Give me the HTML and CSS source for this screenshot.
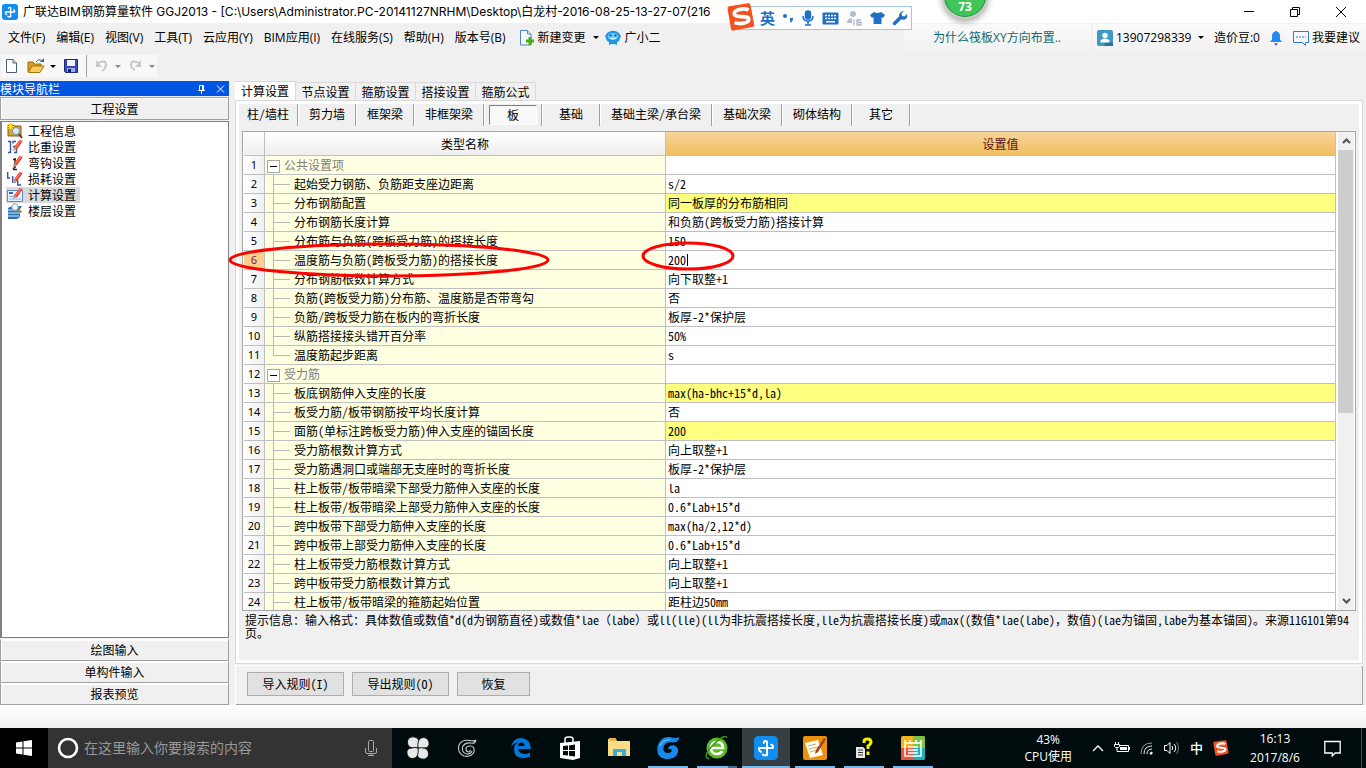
FILE: index.html
```html
<!DOCTYPE html>
<html lang="zh-CN">
<head>
<meta charset="utf-8">
<title>广联达BIM钢筋算量软件 GGJ2013</title>
<link rel="stylesheet" href="styles.css">
</head>
<body>
<svg class="defs" width="0" height="0" aria-hidden="true">
  <defs>
    <symbol id="ggj" viewBox="0 0 16 16"><rect width="16" height="16" rx="3" fill="#0f8df0"/><path d="M8.700 12.800V4.400c0-1.500-2.200-1.500-2.200.2M3.400 8h9.200M3.400 8c-.2 1.200.3 2.200 1.200 2.600M12.600 8c.3-1.200-.1-2-1.100-2.200M8.700 11c0 2.200-2 2.400-2.800 1.300" fill="none" stroke="#fff" stroke-width="1.300" stroke-linecap="round"/></symbol>
    <symbol id="pencil" viewBox="0 0 16 16"><path d="M6.500 9 12.500 1l3.300 1L9.800 10.500z" fill="#e8432a"/><path d="M8 9 13.600 2" stroke="#ff9a80"/><path d="M6.500 9l3 1.500L5.500 12z" fill="#d9a77c"/></symbol>
    <symbol id="sogou" viewBox="0 0 28 28"><path d="M.5 5.500Q.2 3.600 2.200 3.200L21 .3q2-.3 2.500 1.700l3.700 19.500q.4 2-1.600 2.600L6.500 27.500q-2 .5-2.500-1.500z" fill="#f4511e"/><path d="M21.500 7C18 5 7 5.700 7.300 11c.2 4 14 1.200 14.400 5 .3 4.500-9 5.500-14.200 3.500" fill="none" stroke="#fff" stroke-width="3.800"/></symbol>
  </defs>
</svg>

<header class="titlebar">
  <svg class="app-icon" width="16" height="16"><use href="#ggj"/></svg>
  <h1 class="title">广联达BIM钢筋算量软件 GGJ2013 - [C:\Users\Administrator.PC-20141127NRHM\Desktop\白龙村-2016-08-25-13-27-07(216</h1>
  <div class="window-buttons">
    <button type="button" aria-label="最小化"><svg width="12" height="12"><path d="M1 5.500h10" stroke="#000"/></svg></button>
    <button type="button" aria-label="还原"><svg width="12" height="12" fill="none" stroke="#000"><path d="M1.500 3.500h7v7h-7zM3.500 3V1.500h7v7H9"/></svg></button>
    <button type="button" aria-label="关闭"><svg width="12" height="12"><path d="M1 1l10 10M11 1L1 11" stroke="#000"/></svg></button>
  </div>
</header>

<nav class="menubar">
  <div class="menus">
    <button type="button">文件(F)</button>
    <button type="button">编辑(E)</button>
    <button type="button">视图(V)</button>
    <button type="button">工具(T)</button>
    <button type="button">云应用(Y)</button>
    <button type="button">BIM应用(I)</button>
    <button type="button">在线服务(S)</button>
    <button type="button">帮助(H)</button>
    <button type="button">版本号(B)</button>
  </div>
  <button type="button" class="with-icon"><svg width="16" height="16"><path d="M1.500.5h7l3.500 3.500v11H1.500z" fill="#f4f9ff" stroke="#4a86c5"/><path d="M8.500.5V4H12" fill="#cfe2f7" stroke="#4a86c5"/><path d="M7 9.500h2.500V7h3v2.500H15v3h-2.500V15h-3v-2.500H7z" fill="#48ac18"/></svg>新建变更<i class="caret"></i></button>
  <button type="button" class="with-icon assistant"><svg width="16" height="16"><path d="M2 3q6-4.500 12 0l2 3-2 5-2 1v3l-3-1H7l-3 1v-3l-2-1-2-5z" fill="#2196e3"/><ellipse cx="8" cy="6.500" rx="5.300" ry="3.500" fill="#69cdfa"/><circle cx="5.500" cy="5.500" r="1.100" fill="#064b86"/><circle cx="10.500" cy="5.500" r="1.100" fill="#064b86"/><path d="M5.500 8q2.500 2 5 0" fill="none" stroke="#fff"/></svg>广小二</button>
  <div class="notice"><a href="#">为什么筏板XY方向布置..</a></div>
  <div class="account">
    <button type="button" class="with-icon user"><svg width="16" height="16"><rect width="16" height="16" rx="2" fill="#3f98c8"/><path d="M9 10l7 3v3H7z" fill="#26739e"/><circle cx="8" cy="5.500" r="2.700" fill="#fff"/><path d="M3.500 12.500V10l3-1.200h3l3 1.200v2.500z" fill="#fff"/></svg>13907298339<i class="caret"></i></button>
    <span>造价豆:0</span>
    <button type="button" aria-label="通知"><svg width="14" height="16"><path d="M1 12l2-2.500V6q0-3.500 3-4.500 1-1.500 2 0 3 1 3 4.500v3.500L13 12z" fill="#2489f5"/><path d="M5 13.500h4l-2 2z" fill="#173f70"/></svg></button>
    <button type="button" class="with-icon"><svg width="16" height="16" fill="none" stroke="#2a7bdd"><path d="M.5 1.500h15v11h-3v3l-3-3h-9z"/><path d="M3 7h10" stroke-dasharray="2 1"/></svg>我要建议</button>
  </div>
</nav>

<div class="toolbar">
  <button type="button" aria-label="新建"><svg width="16" height="16"><path d="M2.500 1.500h6.500l3.500 3.500v9.500h-10z" fill="#fff" stroke="#465f78"/><path d="M9 1.500V5h3.500" fill="#d8e6f2" stroke="#465f78"/></svg></button>
  <button type="button" aria-label="打开"><svg width="18" height="16"><path d="M1 14V4h5l1 2h7v3" fill="#d89a20" stroke="#a06a0a"/><path d="M1.500 14.500 5 8h12l-4 6.500z" fill="#f7ce5e" stroke="#a8720c"/><path d="M9 4q3-4 6-1" fill="none" stroke="#38638d"/><path d="M13 4h4V0z" fill="#38638d"/></svg><i class="caret"></i></button>
  <button type="button" aria-label="保存"><svg width="16" height="16"><path d="M1.500 1.500h13v13h-12l-1-1z" fill="#3948b4" stroke="#202b80"/><path d="M4 2h8v6H4z" fill="#eef2ff"/><path d="M4 10h8v4H4z" fill="#9caaf0"/><path d="M5 11h3v3H5z" fill="#17205f"/></svg></button>
  <span class="divider"></span>
  <button type="button" aria-label="撤销" disabled><svg width="16" height="16"><path d="M4 5q8-4 8 2 0 3-4 6" fill="none" stroke="#c8c8c8" stroke-width="2"/><path d="M2 2v7h6z" fill="#c8c8c8"/></svg><i class="caret"></i></button>
  <button type="button" aria-label="重做" disabled><svg width="16" height="16"><path d="M11 5Q3 1 3 7q0 3 4 5" fill="none" stroke="#c8c8c8" stroke-width="2"/><path d="M13 2v7H7z" fill="#c8c8c8"/></svg><i class="caret"></i></button>
</div>

<main class="workspace">
  <aside class="sidebar">
    <div class="side-head"><h2>模块导航栏</h2>
      <button type="button" aria-label="固定"><svg width="9" height="10" fill="none" stroke="#fff"><path d="M2.500 6V1.500h4V6M5.500 2v4M1 6.500h7M4.500 7v3"/></svg></button>
      <button type="button" aria-label="关闭"><svg width="9" height="10"><path d="M1 1.500l7 7M8 1.500l-7 7" stroke="#fff"/></svg></button>
    </div>
    <button type="button" class="section first">工程设置</button>
    <ul class="tree">
      <li><a href="#"><svg width="16" height="16"><path d="M1 2h5l1 1h7v10H1z" fill="#d9a13a" stroke="#8a5d14"/><path d="M3.500 0v7M0 3.500h7M1 1l5 5M6 1L1 6" stroke="#ffd92c"/><circle cx="9" cy="8" r="3.500" fill="#d8ecff" stroke="#7898b8"/><path d="M12 11l3 4" stroke="#604020" stroke-width="2"/></svg>工程信息</a></li>
      <li><a href="#"><svg width="16" height="16"><path d="M1 2.500h2.500v11H1M6 4.500V2.500h3M6 7.500h3.500v6H7" fill="none" stroke="#2f56a8" stroke-width="1.400"/><use href="#pencil"/></svg>比重设置</a></li>
      <li><a href="#"><svg width="16" height="16"><path d="M6 4.500h3M8 3v10M8 12l-2 2M6 14.500h4" stroke="#222" stroke-width="1.400" fill="none"/><use href="#pencil"/></svg>弯钩设置</a></li>
      <li><a href="#"><svg width="16" height="16"><path d="M.7 1v6H3M5.700 5v6h3M10.700 9v5H14" fill="none" stroke="#2f56a8" stroke-width="1.400"/><use href="#pencil"/></svg>损耗设置</a></li>
      <li><a href="#" class="selected"><svg width="16" height="16"><path d="M.5 3.500h15v11H.5z" fill="#e7f1ff" stroke="#5a87c5"/><path d="M2 6h4" stroke="#2d6ac1" stroke-width="2"/><path d="M2 9.500h9M2 12h12" stroke="#8fb0dc"/><use href="#pencil"/></svg>计算设置</a></li>
      <li><a href="#"><svg width="16" height="16"><path d="M1 5l4-2h10l-2 3v8l-3 2H1z" fill="#2f70b4"/><path d="M1 7h12M1 10h12M1 13h11" stroke="#d2eaff"/><circle cx="8" cy="4" r="3.200" fill="#f0f8ff" stroke="#8aa8c0"/><path d="M10.500 6l4 3.500" stroke="#a08050" stroke-width="2"/></svg>楼层设置</a></li>
    </ul>
    <button type="button" class="section">绘图输入</button>
    <button type="button" class="section">单构件输入</button>
    <button type="button" class="section">报表预览</button>
  </aside>

  <section class="content">
    <div class="tabs" role="tablist">
      <button type="button" role="tab" aria-selected="true">计算设置</button>
      <button type="button" role="tab">节点设置</button>
      <button type="button" role="tab">箍筋设置</button>
      <button type="button" role="tab">搭接设置</button>
      <button type="button" role="tab">箍筋公式</button>
    </div>
    <div class="page">
      <div class="subtabs">
        <button type="button">柱/墙柱</button>
        <button type="button">剪力墙</button>
        <button type="button">框架梁</button>
        <button type="button">非框架梁</button>
        <button type="button" class="pressed"><span>板</span></button>
        <button type="button">基础</button>
        <button type="button">基础主梁/承台梁</button>
        <button type="button">基础次梁</button>
        <button type="button">砌体结构</button>
        <button type="button">其它</button>
      </div>
      <div class="grid">
        <div class="grid-view">
          <table>
            <colgroup><col class="c-num"><col class="c-name"><col></colgroup>
            <thead><tr><th></th><th>类型名称</th><th class="active">设置值</th></tr></thead>
            <tbody>
              <tr class="group"><th>1</th><td><button type="button" aria-label="折叠"></button>公共设置项</td><td></td></tr>
              <tr><th>2</th><td><i class="branch"></i>起始受力钢筋、负筋距支座边距离</td><td>s/2</td></tr>
              <tr class="changed"><th>3</th><td><i class="branch"></i>分布钢筋配置</td><td>同一板厚的分布筋相同</td></tr>
              <tr><th>4</th><td><i class="branch"></i>分布钢筋长度计算</td><td>和负筋(跨板受力筋)搭接计算</td></tr>
              <tr><th>5</th><td><i class="branch"></i>分布筋与负筋(跨板受力筋)的搭接长度</td><td>150</td></tr>
              <tr class="current"><th>6</th><td><i class="branch"></i><label for="lap">温度筋与负筋(跨板受力筋)的搭接长度</label></td><td><input id="lap" type="text" value="200"></td></tr>
              <tr><th>7</th><td><i class="branch"></i>分布钢筋根数计算方式</td><td>向下取整+1</td></tr>
              <tr><th>8</th><td><i class="branch"></i>负筋(跨板受力筋)分布筋、温度筋是否带弯勾</td><td>否</td></tr>
              <tr><th>9</th><td><i class="branch"></i>负筋/跨板受力筋在板内的弯折长度</td><td>板厚-2*保护层</td></tr>
              <tr><th>10</th><td><i class="branch"></i>纵筋搭接接头错开百分率</td><td>50%</td></tr>
              <tr><th>11</th><td><i class="branch last"></i>温度筋起步距离</td><td>s</td></tr>
              <tr class="group"><th>12</th><td><button type="button" aria-label="折叠"></button>受力筋</td><td></td></tr>
              <tr class="changed"><th>13</th><td><i class="branch"></i>板底钢筋伸入支座的长度</td><td>max(ha-bhc+15*d,la)</td></tr>
              <tr><th>14</th><td><i class="branch"></i>板受力筋/板带钢筋按平均长度计算</td><td>否</td></tr>
              <tr class="changed"><th>15</th><td><i class="branch"></i>面筋(单标注跨板受力筋)伸入支座的锚固长度</td><td>200</td></tr>
              <tr><th>16</th><td><i class="branch"></i>受力筋根数计算方式</td><td>向上取整+1</td></tr>
              <tr><th>17</th><td><i class="branch"></i>受力筋遇洞口或端部无支座时的弯折长度</td><td>板厚-2*保护层</td></tr>
              <tr><th>18</th><td><i class="branch"></i>柱上板带/板带暗梁下部受力筋伸入支座的长度</td><td>la</td></tr>
              <tr><th>19</th><td><i class="branch"></i>柱上板带/板带暗梁上部受力筋伸入支座的长度</td><td>0.6*Lab+15*d</td></tr>
              <tr><th>20</th><td><i class="branch"></i>跨中板带下部受力筋伸入支座的长度</td><td>max(ha/2,12*d)</td></tr>
              <tr><th>21</th><td><i class="branch"></i>跨中板带上部受力筋伸入支座的长度</td><td>0.6*Lab+15*d</td></tr>
              <tr><th>22</th><td><i class="branch"></i>柱上板带受力筋根数计算方式</td><td>向上取整+1</td></tr>
              <tr><th>23</th><td><i class="branch"></i>跨中板带受力筋根数计算方式</td><td>向上取整+1</td></tr>
              <tr><th>24</th><td><i class="branch"></i>柱上板带/板带暗梁的箍筋起始位置</td><td>距柱边50mm</td></tr>
            </tbody>
          </table>
        </div>
        <div class="scrollbar">
          <button type="button" aria-label="向上滚动"><svg width="9" height="6"><path d="M1 5l3.500-3.500L8 5" fill="none" stroke="#505050" stroke-width="2"/></svg></button>
          <div class="thumb"></div>
          <div class="track"></div>
          <button type="button" aria-label="向下滚动"><svg width="9" height="6"><path d="M1 1l3.500 3.500L8 1" fill="none" stroke="#505050" stroke-width="2"/></svg></button>
        </div>
      </div>
      <p class="hint">提示信息：输入格式：具体数值或数值*d(d为钢筋直径)或数值*lae（labe）或ll(lle)(ll为非抗震搭接长度,lle为抗震搭接长度)或max((数值*lae(labe)，数值)(lae为锚固,labe为基本锚固)。来源11G101第94页。</p>
    </div>
    <div class="actions">
      <button type="button">导入规则(I)</button>
      <button type="button">导出规则(O)</button>
      <button type="button" class="narrow">恢复</button>
    </div>
  </section>
</main>

<footer class="taskbar">
  <button type="button" class="start" aria-label="开始"><svg width="16" height="16" fill="#fff"><path d="M0 2.500 6.500 1.500v6H0zM7.500 1.300 16 0v7.500H7.500zM0 8.500h6.500v6L0 13.500zM7.500 8.500H16V16l-8.500-1.300z"/></svg></button>
  <label class="search">
    <svg width="22" height="22"><circle cx="11" cy="11" r="9" fill="none" stroke="#fff" stroke-width="2.600"/></svg>
    <input type="text" placeholder="在这里输入你要搜索的内容">
    <svg width="12" height="18" fill="none" stroke="#aaa"><rect x="3.500" y="1.500" width="5" height="11" rx="1"/><path d="M.5 9v4q0 1.500 1.500 1.500h8q1.500 0 1.500-1.500V9M6 14.500v2M3 16.500h6"/></svg>
  </label>
  <div class="apps">
    <button type="button" aria-label="四叶"><svg width="24" height="24" viewBox="0 0 24 24" fill="#e8e8e8" stroke="#000b0d" stroke-width=".9"><path d="M12 12Q4 13 2 9 0 3 5 1q7-1 8 5 0 3-1 6z"/><path d="M12 12Q11 4 15 2q6-2 8 4 1 6-5 6-3 1-6 0z"/><path d="M12 12q8-1 10 3 2 6-3 8-7 1-8-5 0-3 1-6z"/><path d="M12 12q1 8-3 10-6 2-8-4-1-6 5-6 3-1 6 0z"/></svg></button>
    <button type="button" aria-label="螺旋"><svg width="20" height="20" viewBox="0 0 20 20" fill="none" stroke="#c9cccd" stroke-width="1.100"><path d="M19 2q-2 1.500-6 .5Q5 1 2 7q-2 8 5 11 7 1.500 10-4 1-6-4-6-4 0-4 3t3 3q1.500-.5 1-2M19 2q-1 4-5 3-6-1-8.500 4-1 6 4.500 7 4 0 5-3"/></svg></button>
    <button type="button" class="pinned" aria-label="Edge"><svg width="22" height="22" viewBox="0 0 22 22"><path d="M1 10Q3 1 11 1q9 0 10 11H8q1 5 7 5 3 0 5-1.500v4Q17 21 13 21q-9 0-9-9 0-5 5-7-6 1-8 5zm7-1h6.500q0-3.500-3-3.500T8 9z" fill="#0078d7"/></svg></button>
    <button type="button" aria-label="应用商店"><svg width="22" height="24" viewBox="0 0 22 24"><path d="M1 7l20-2v17l-7 2-13-2z" fill="#fff"/><path d="M6 7V3q0-2 3-2h2q3 0 3 2v3" fill="none" stroke="#fff" stroke-width="1.500"/><path d="M4 10l5-.5V14H4zM10 9.400l6-.9V14h-6zM4 15h5v4.500L4 19zM10 15h6v5.500l-6-.8z" fill="#000b0d"/></svg></button>
    <button type="button" aria-label="文件资源管理器"><svg width="22" height="20" viewBox="0 0 22 20"><path d="M0 1h8l1 2h13v15H0z" fill="#fbdc82"/><path d="M1 0h7v3H1z" fill="#e9b33e"/><path d="M5 18v-6q0-1 1-1h11q1 0 1 1v6h-4v-4H9v4z" fill="#35ace0"/></svg></button>
    <button type="button" class="running" aria-label="浏览器G"><svg width="24" height="24" viewBox="0 0 24 24"><path d="M23.500 1q-1 6-7 5.500-7-1.500-9 4.500-1 6 5 6 4-1 3-3.500-2-1-4-.5 2-5 7.500-3.500 5 3 2 9Q17 24 9 23q-1-1-3-1Q0 19 1.500 10 5 0 14 1q6 2 9.500 0z" fill="#1789ed"/><path d="M4 10Q7 3 14 4" fill="none" stroke="#79d3ff"/></svg></button>
    <button type="button" class="running stacked" aria-label="浏览器e"><svg width="24" height="24" viewBox="0 0 24 24"><circle cx="12" cy="12" r="10.500" fill="#5cbd22"/><path d="M6 12h12q0-6-6-6t-6 6q0 6 6 6 4 0 5-3" fill="none" stroke="#fff" stroke-width="2.500"/><path d="M4 23Q-3 21 8 9 20-3 22 2" fill="none" stroke="#39951c" stroke-width="1.500"/></svg></button>
    <button type="button" class="running active" aria-label="GGJ2013"><svg width="24" height="24"><use href="#ggj"/></svg></button>
    <button type="button" class="running" aria-label="记事"><svg width="24" height="24" viewBox="0 0 24 24"><rect width="24" height="24" rx="2" fill="#eb920d"/><path d="M2 7l13-3 5 15-13 3z" fill="#fffdf0"/><path d="M5 10l8-2M6 13l9-2M7 16l7-2" stroke="#c4a878"/><path d="M21 2l2 1-8 13-3 2 1-4z" fill="#a54117"/></svg></button>
    <button type="button" class="running" aria-label="帮助文档"><svg width="18" height="22" viewBox="0 0 18 22"><path d="M1 10h7l2 2v9H1z" fill="#e9e9e9"/><path d="M3 13h5M3 15.500h5M3 18h5" stroke="#333"/><path d="M9 6V4.500Q9 2 12.500 2T16 5q0 2-3 4v3M13 14.500v3.500" fill="none" stroke="#f4ee00" stroke-width="3"/></svg></button>
    <button type="button" class="running" aria-label="工具箱"><svg width="24" height="24" viewBox="0 0 24 24"><rect width="24" height="24" rx="2" fill="#f8b31c"/><path d="M12 0h10q2 0 2 2v10H12z" fill="#7bc342"/><path d="M0 12h12v12H2q-2 0-2-2z" fill="#ea5542"/><path d="M12 12h12v10q0 2-2 2H12z" fill="#1cb0bd"/><path d="M4 4v16h16V4M4 7h16M9 4v4M15 4v4M7 11h10M7 14h10M7 17h10" fill="none" stroke="#fff" stroke-width="1.500"/></svg></button>
  </div>
  <div class="cpu">43%<br>CPU使用</div>
  <div class="tray">
    <button type="button" aria-label="显示隐藏的图标"><svg width="12" height="8"><path d="M1 7l5-5 5 5" fill="none" stroke="#fff" stroke-width="1.300"/></svg></button>
    <button type="button" aria-label="电源"><svg width="16" height="12" fill="none" stroke="#fff"><path d="M5 3.500h9.500v6H5M15.500 5v3M.5 2.500h5v2l-1 1h-3l-1-1zM1.500 0v2M4.500 0v2M3 6v3.500h2"/><path d="M6 5h7v3H6z" fill="#fff" stroke="none"/></svg></button>
    <button type="button" aria-label="网络"><svg width="14" height="14" fill="none" stroke="#eee"><path d="M1 13Q1 2 12 2" stroke="#999"/><path d="M4 13Q4 5 12 5M7 13Q7 8 12 8"/><path d="M10 13q0-2 2-2v2z" fill="#fff"/></svg></button>
    <button type="button" aria-label="音量"><svg width="16" height="14" fill="none" stroke="#fff"><path d="M.5 4.500H3l3-3v11l-3-3H.5zM8 5q1.500 2 0 4M10 3q3.500 4 0 8"/><path d="M12.500 1q4 6 0 12" stroke="#777"/></svg></button>
    <button type="button" class="ime">中</button>
    <button type="button" aria-label="搜狗输入法"><svg width="16" height="16"><use href="#sogou"/></svg></button>
  </div>
  <div class="clock">16:13<br>2017/8/6</div>
  <button type="button" class="action-center" aria-label="操作中心"><svg width="17" height="17"><path d="M.8 1.500h15.400v11.500h-5l-3 3v-3H.8z" fill="none" stroke="#fff" stroke-width="1.300"/></svg></button>
</footer>

<div class="ime-bar">
  <svg class="ime-logo" width="28" height="28"><use href="#sogou"/></svg>
  <b>英</b>
  <svg width="12" height="12" fill="#1e6fc8"><circle cx="3" cy="4" r="2"/><path d="M8 6h3q0 4-3 5 1-2 0-3z"/></svg>
  <svg width="14" height="16" fill="none" stroke="#1e6fc8" stroke-width="1.500"><rect x="4.500" y="1" width="5" height="8" rx="2.500" fill="#1e6fc8"/><path d="M2 6q0 5 5 5t5-5M7 11v4M4 15h6"/></svg>
  <svg width="17" height="13"><rect x=".5" y=".5" width="16" height="12" rx="1" fill="#1e6fc8"/><path d="M3 3.500h11M3 6.500h11" stroke="#fff" stroke-width="1.500" stroke-dasharray="2 1"/><path d="M4 9.800h9" stroke="#fff" stroke-width="1.500"/></svg>
  <svg width="17" height="16"><circle cx="7" cy="4" r="3" fill="#b3bdce"/><path d="M1 13q0-5 6-5t6 5z" fill="#b3bdce"/><path d="M6 8h10v8H6z" fill="#fff"/><path d="M8 9.500v6M15 10h-4v5h4v-2.500h-4" fill="none" stroke="#a9b6ca" stroke-width="1.300"/></svg>
  <svg width="15" height="14"><path d="M4 1q3.500 2 7 0l4 3-2 3-1.500-1v7h-8V6L2 7 0 4z" fill="#1e6fc8"/></svg>
  <svg width="16" height="16"><path d="M2.500 13.500 9 7" stroke="#1e6fc8" stroke-width="3.500" stroke-linecap="round"/><path d="M12 1 9.500 3.500l.5 2.500 2.500.5L15 4q1 4-2 5.500-3 1-5-1-2-2.500 0-5.500Q9.500 1 12 1z" fill="#1e6fc8"/></svg>
</div>
<div class="speed-ball">73</div>
<svg class="mark mark-name" viewBox="0 0 322 36" preserveAspectRatio="none"><ellipse cx="161" cy="18" rx="159" ry="16"/></svg>
<svg class="mark mark-value" viewBox="0 0 94 32" preserveAspectRatio="none"><ellipse cx="47" cy="16" rx="45" ry="13"/></svg>
</body>
</html>
```

FILE: styles.css
```css
* { box-sizing: border-box; }

body {
  margin: 0;
  height: 100vh;
  display: flex;
  flex-direction: column;
  overflow: hidden;
  position: relative;
  background: linear-gradient(#fff, #f0f0f0) 0 calc(100% - 40px) / 100% 23px no-repeat #f0f0f0;
  color: #000;
  font: 12px/16px "Noto Sans Mono CJK SC", "Noto Sans CJK SC", sans-serif;
}

button {
  border: 0;
  padding: 0;
  background: none;
  color: inherit;
  font: inherit;
  white-space: nowrap;
}
input { font: inherit; color: inherit; outline: 0; }
a { color: inherit; text-decoration: none; }
svg { display: block; flex: none; }
.defs { position: absolute; }

.caret {
  border: 3px solid transparent;
  border-top-color: #000;
  border-bottom: 0;
}

/* Title bar */
.titlebar {
  display: flex;
  align-items: center;
  height: 23px;
  padding: 0 13px 0 2px;
  gap: 5px;
  background: #fff;
}
.title {
  flex: 1;
  margin: 0;
  font: 400 12px/16px Inter, "Noto Sans CJK SC", sans-serif;
  white-space: nowrap;
  overflow: hidden;
}
.window-buttons { display: flex; gap: 34px; padding-right: 6px; }

/* Menu bar */
.menubar {
  display: flex;
  align-items: center;
  height: 29px;
  padding-left: 8px;
  font-family: "Open Sans", "Noto Sans CJK SC", sans-serif;
}
.menus { display: flex; gap: 11px; margin-right: 13px; }
.with-icon { display: flex; align-items: center; gap: 3px; }
.with-icon .caret { margin-left: 4px; }
.assistant { margin-left: 6px; gap: 4px; }
.notice {
  flex: 0 0 187px;
  margin-left: auto;
  line-height: 28px;
  padding-left: 29px;
  white-space: nowrap;
  color: #0c6a70;
  background: linear-gradient(#fafafa, #f1f1f1);
}
.account {
  flex: 0 0 273px;
  margin-left: 2px;
  display: flex;
  align-items: center;
  justify-content: space-between;
  height: 28px;
  padding: 0 6px 0 4px;
  background: linear-gradient(#fafafa, #f1f1f1);
}

/* Tool bar */
.toolbar {
  display: flex;
  align-items: center;
  align-self: flex-start;
  height: 22px;
  margin: 3px 0 4px 1px;
  padding: 0 2px 0 3px;
  gap: 7px;
  background: #f8f8f8;
}
.toolbar button { display: flex; align-items: center; gap: 5px; }
.toolbar button:disabled .caret { border-top-color: #888; }
.divider { width: 1px; height: 22px; background: #a0a0a0; }

/* Workspace */
.workspace { flex: 1; min-height: 0; display: flex; gap: 6px; margin-bottom: 23px; }

.sidebar { flex: 0 0 229px; display: flex; flex-direction: column; }
.side-head {
  display: flex;
  align-items: center;
  gap: 10px;
  height: 15px;
  padding-right: 4px;
  margin-bottom: 1px;
  background: #0054e3;
  color: #fff;
}
.side-head h2 { flex: 1; margin: 0; font-size: 12px; font-weight: 400; line-height: 14px; letter-spacing: normal; }
.section {
  flex: none;
  height: 22px;
  border: 1px solid #a0a0a0;
  border-top-color: #fff;
  box-shadow: inset 1px 1px #fff;
}
.section.first { border-top-color: #a0a0a0; height: 23px; margin-bottom: 1px; }
.tree {
  flex: 1;
  min-height: 0;
  margin: 0 0 1px;
  padding: 1px 0 0 4px;
  list-style: none;
  background: #fff;
  border: 1px solid #808088;
  border-left-width: 2px;
}
.tree li { display: flex; }
.tree a { display: flex; gap: 5px; height: 16px; padding: 0 4px 0 1px; }
.tree .selected { background: #d9d9d9; }

.content { flex: 1; min-width: 0; display: flex; flex-direction: column; padding-right: 3px; }
.tabs { display: flex; align-items: flex-end; height: 19px; }
.tabs button {
  width: 60px;
  height: 18px;
  border: 1px solid #dadada;
  border-left-width: 0;
  border-bottom: 0;
}
.tabs button[aria-selected="true"] { width: 61px; height: 19px; background: #fff; }
.page {
  flex: 1;
  min-height: 0;
  display: flex;
  flex-direction: column;
  border: 1px solid #d9d9d9;
  box-shadow: inset 0 0 0 3px #fff;
  padding: 3px 6px 3px;
}
.subtabs { display: flex; height: 22px; margin-left: -3px; }
.subtabs button {
  min-width: 58px;
  height: 22px;
  padding: 0 10px 2px 11px;
  border-right: 1px solid #a0a0a0;
  box-shadow: 1px 0 #fff;
}
.subtabs button:first-child { padding: 0 8px 2px; }
.subtabs .pressed { padding: 0 4px 0 5px; }
.pressed span {
  display: block;
  height: 20px;
  line-height: 18px;
  background: #f9f9f9;
  border: 1px solid #808080;
  border-right-color: #fff;
  border-bottom-color: #fff;
}

/* Settings grid */
.grid {
  flex: 1;
  min-height: 0;
  display: flex;
  gap: 2px;
  margin: 5px 0 0;
  padding: 0 1px;
  border: 1px solid #a8a8a8;
  background: #fff;
}
.grid-view { flex: 1; min-width: 0; overflow: hidden; }
table { width: 100%; table-layout: fixed; border-collapse: separate; border-spacing: 0; }
.c-num { width: 21px; }
.c-name { width: 401px; }
th, td {
  height: 19px;
  padding: 0 0 0 2px;
  border: solid #bfbfbf;
  border-width: 0 1px 1px 0;
  font-weight: 400;
  line-height: 18px;
  text-align: left;
  white-space: nowrap;
}
thead th { height: 24px; padding: 0; text-align: center; background: linear-gradient(#fff, #efefef); }
thead .active { background: linear-gradient(#f8d49a, #efbf60); color: #5a1020; }
tbody th { padding: 0; text-align: center; background: linear-gradient(90deg, #fff, #f0f0f0); font-family: "Noto Sans", sans-serif; font-size: 11px; }
tbody td:nth-child(2) { background: #ffffe1; }
.current th { background: #ffd08c; color: #801060; }
.changed td:last-child { background: #ffff80; }
.group td { color: #808080; }
.group button {
  width: 13px;
  height: 13px;
  margin-right: 4px;
  vertical-align: middle;
  background: linear-gradient(#000, #000) center / 7px 1px no-repeat #fff;
  border: 1px solid #a8a8a8;
}
.branch {
  display: inline-block;
  width: 17px;
  height: 18px;
  margin: 0 4px 0 6px;
  vertical-align: top;
  background:
    linear-gradient(#b8b8b8, #b8b8b8) left / 1px 100% no-repeat,
    linear-gradient(#b8b8b8, #b8b8b8) center / 100% 1px no-repeat;
}
.branch.last {
  background:
    linear-gradient(#b8b8b8, #b8b8b8) left top / 1px 50% no-repeat,
    linear-gradient(#b8b8b8, #b8b8b8) center / 100% 1px no-repeat;
}
td input {
  display: block;
  width: 20px;
  height: 12px;
  padding: 0;
  border: 0;
  border-right: 1px solid #000;
}

.scrollbar { flex: 0 0 16px; display: flex; flex-direction: column; background: #f0f0f0; }
.scrollbar button { height: 18px; display: grid; place-items: center; }
.thumb { flex: 0 0 55%; width: 15px; background: #cdcdcd; }
.track { flex: 1; }

.hint { flex: 0 0 49px; margin: 0; padding: 2px 2px 0 3px; line-height: 13px; }

.actions {
  display: flex;
  gap: 8px;
  margin-top: 1px;
  padding: 6px 11px 9px;
  border: 1px solid #fff;
  border-width: 1px 0 0 1px;
  box-shadow: inset -1px -1px #a0a0a0;
}
.actions button { width: 97px; height: 24px; border: 1px solid #adadad; background: #e1e1e1; }
.actions .narrow { width: 73px; }

/* Task bar */
.taskbar {
  flex: 0 0 40px;
  display: flex;
  align-items: center;
  background: #000b0d;
  color: #fff;
  font-family: "Open Sans", "Noto Sans CJK SC", sans-serif;
}
.taskbar button { display: grid; place-items: center; }
.start { width: 48px; height: 40px; background: #000; }
.search { flex: 0 0 344px; height: 40px; display: flex; align-items: center; gap: 5px; padding: 0 15px 0 9px; background: #333; }
.search input { flex: 1; min-width: 0; border: 0; padding: 0; background: none; font-size: 14px; }
.search input::placeholder { color: #999; opacity: 1; }
.apps { display: flex; gap: 1px; margin-left: 2px; }
.apps button { width: 48px; height: 40px; }
.apps .pinned { margin-left: 5px; }
.apps .running { background: linear-gradient(#76b9ed, #76b9ed) bottom / 40px 2px no-repeat; }
.apps .stacked { background: linear-gradient(90deg, #76b9ed 78%, #456f92 78%) bottom / 40px 2px no-repeat; }
.apps .active { background: linear-gradient(#76b9ed, #76b9ed) bottom / 100% 2px no-repeat #363f41; }
.cpu { margin-left: auto; line-height: 17px; text-align: center; }
.tray { display: flex; align-items: center; gap: 10px; margin-left: 20px; }
.ime { font-size: 13px; font-weight: 500; }
.clock { width: 64px; margin-left: 14px; line-height: 19px; text-align: center; }
.action-center { margin: 0 16px 0 17px; padding-right: 4px; }
.taskbar::after { content: ""; align-self: stretch; border-left: 1px solid #4a4a4a; margin-right: 4px; }

/* Floating overlays */
.ime-bar {
  position: absolute;
  left: 738px;
  top: 6px;
  height: 24px;
  display: flex;
  align-items: center;
  gap: 7px;
  padding: 0 3px 0 21px;
  background: #fff;
  border: 1px solid #a9c4dc;
}
.ime-bar b { color: #1e6fc8; font-size: 15px; line-height: 20px; }
.ime-logo { position: absolute; left: -12px; top: -4px; }
.speed-ball {
  position: absolute;
  left: 942px;
  top: -27px;
  width: 46px;
  height: 46px;
  padding-top: 22px;
  border: 2px solid #c4ccc6;
  border-radius: 50%;
  background: #3fc55a;
  box-shadow: inset 0 0 0 1px #22913a, 0 3px 6px #0005;
  color: #fff;
  font: 700 12px/20px "Open Sans", sans-serif;
  text-align: center;
}
.mark { position: absolute; fill: none; stroke: #f00; stroke-width: 3; pointer-events: none; }
.mark-name { left: 228px; top: 242px; width: 322px; height: 36px; }
.mark-value { left: 641px; top: 240px; width: 94px; height: 32px; }
```
